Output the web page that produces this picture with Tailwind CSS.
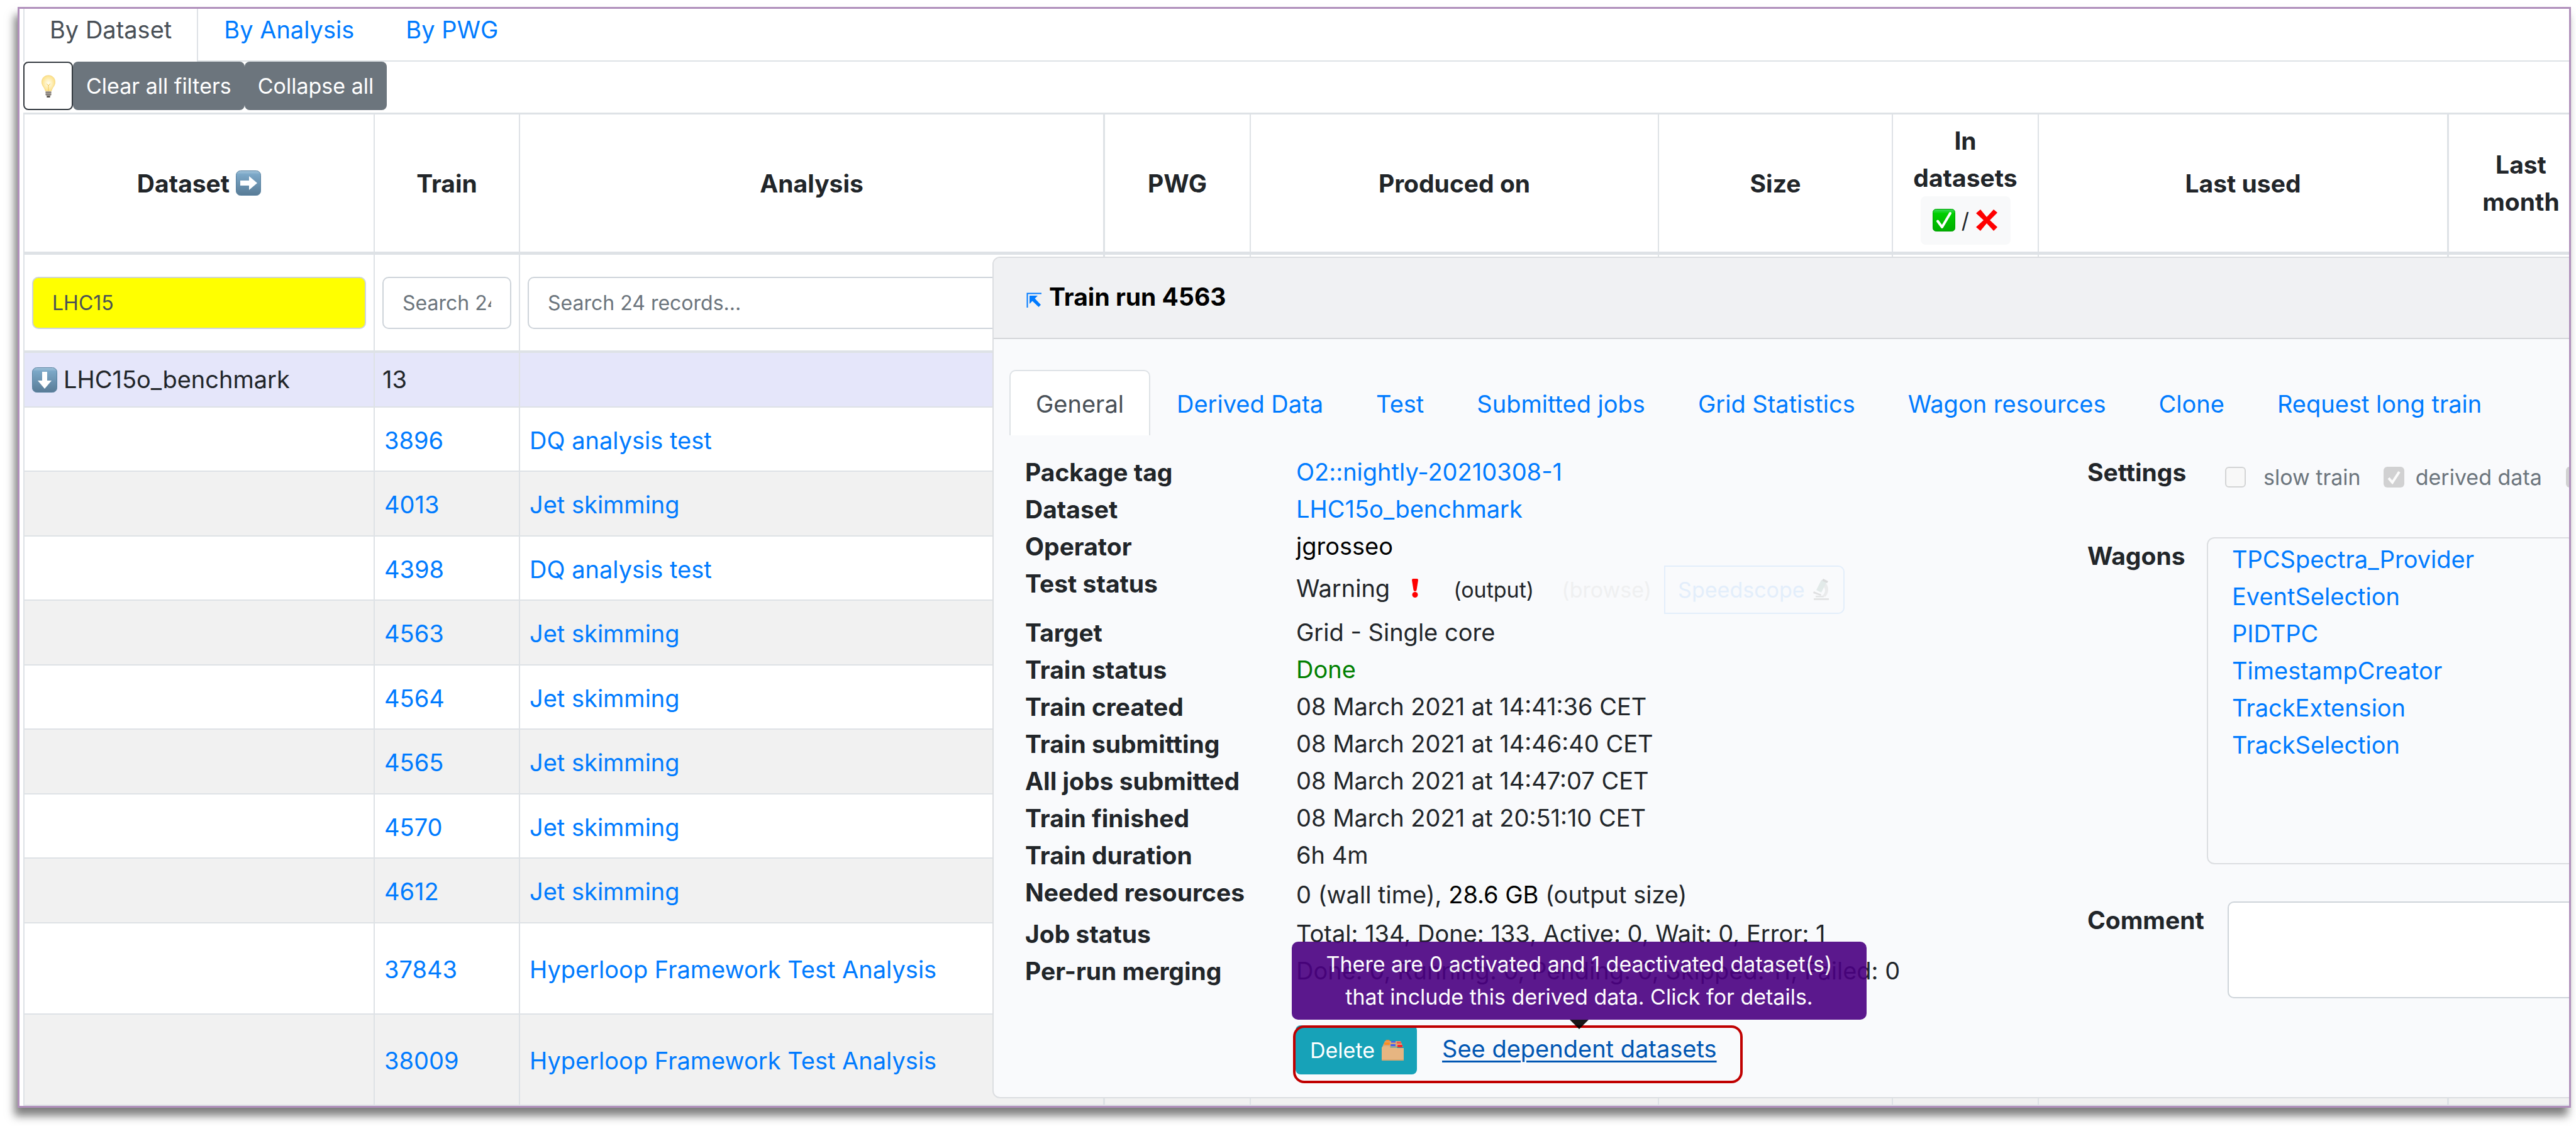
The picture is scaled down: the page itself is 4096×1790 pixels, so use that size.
<!DOCTYPE html>
<html lang="en">
<head>
<meta charset="utf-8">
<title>Train run 4563</title>
<script src="https://cdn.jsdelivr.net/npm/@tailwindcss/browser@4"></script>
</head>
<body class="bg-white pt-[11px] pl-7 pr-2 pb-[29px] font-['Inter','Liberation_Sans',sans-serif] text-[38px] leading-[59px] text-[#212529]">
<svg class="absolute h-0 w-0" aria-hidden="true">
  <defs>
    <linearGradient id="steel" x1="0" y1="0" x2="0" y2="1"><stop offset="0" stop-color="#a5c6dc"/><stop offset=".15" stop-color="#7ba7c7"/><stop offset="1" stop-color="#587b96"/></linearGradient>
    <linearGradient id="leaf" x1="0" y1="0" x2="0" y2="1"><stop offset="0" stop-color="#3fdc5c"/><stop offset=".2" stop-color="#00cf00"/><stop offset="1" stop-color="#00ae00"/></linearGradient>
    <radialGradient id="glow"><stop offset="0" stop-color="#fffef2"/><stop offset="1" stop-color="#fde28a"/></radialGradient>
  </defs>
</svg>

<main class="relative overflow-hidden border-[3px] border-[#b08fbb] bg-white shadow-[-5px_13px_13px_rgba(0,0,0,0.5)]">
  <nav class="ml-[6px] flex h-[84px] border-b-2 border-[#dee2e6]" aria-label="Grouping">
    <a href="#dataset" class="-mb-[2px] border-x-2 border-[#dee2e6] bg-white px-10 pt-1 text-[#495057]">By Dataset</a>
    <a href="#analysis" class="px-[41px] pt-1 text-[#007bff]">By Analysis</a>
    <a href="#pwg" class="px-[41px] pt-1 text-[#007bff]">By PWG</a>
  </nav>

  <div class="ml-[6px] flex h-[81px] items-start text-[34px]">
    <button type="button" aria-label="Hints" class="flex h-[77px] w-[79px] items-center justify-center rounded-lg border-2 border-[#343a40] bg-white">
      <svg class="h-[36px] w-[24px]" viewBox="0 0 24 36"><path d="M12 1C5.500 1 1.500 5.500 1.500 11.500c0 4.500 2.600 7 4.200 10 .8 1.600 1.200 3 1.800 4.500h9c.6-1.500 1-2.900 1.800-4.500 1.600-3 4.200-5.500 4.200-10C22.500 5.500 18.500 1 12 1z" fill="url(#glow)" stroke="#f5d680"/><path d="M9 14l3 3 3-3M12 17v9" fill="none" stroke="#f1c75b"/><path d="M7.500 26h9v6l-2 2v2h-5v-2l-2-2z" fill="#a8a29a"/><path d="M7.500 28.500h9M7.500 31.500h9" stroke="#6f6a64"/><rect x="9.500" y="33.500" width="5" height="2.500" fill="#4c4844"/></svg>
    </button>
    <button type="button" class="h-[77px] rounded-lg bg-[#6c757d] px-[21px] text-white">Clear all filters</button>
    <button type="button" class="h-[77px] rounded-lg bg-[#6c757d] px-[21px] text-white">Collapse all</button>
  </div>

  <div class="pl-[6px]">
  <table class="w-[calc(100%+38px)] table-fixed border-separate border-spacing-0 text-left [&_td]:border-l-2 [&_td]:border-[#dee2e6] [&_td]:px-[15px] [&_th]:border-t-[3px] [&_th]:border-b-[5px] [&_th]:border-l-2 [&_th]:border-[#dee2e6] [&_th]:text-center [&_th]:text-[39px] [&_th]:font-bold [&_th:nth-child(4)]:border-l-[3px] [&_th:nth-child(9)]:border-l-[3px] [&_td:nth-child(4)]:border-l-[3px] [&_td:nth-child(9)]:border-l-[3px]">
    <colgroup>
      <col class="w-[557px]"><col class="w-[231px]"><col><col class="w-[233px]"><col class="w-[649px]"><col class="w-[372px]"><col class="w-[232px]"><col class="w-[651px]"><col class="w-[232px]">
    </colgroup>
    <thead>
      <tr class="h-[226px]">
        <th scope="col"><span class="inline-flex items-center gap-[10px]">Dataset
          <svg class="h-10 w-10" viewBox="0 0 40 40" role="img" aria-label="right"><rect x=".5" y=".5" width="39" height="39" rx="7" fill="url(#steel)" stroke="#56809f"/><path d="M7 16h14V9l13 11-13 11v-7H7z" fill="#fff"/></svg></span></th>
        <th scope="col">Train</th>
        <th scope="col">Analysis</th>
        <th scope="col">PWG</th>
        <th scope="col">Produced on</th>
        <th scope="col">Size</th>
        <th scope="col">In<br>datasets
          <span class="mx-auto flex h-[77px] w-[143px] items-center justify-center gap-[10px] rounded-lg bg-[#f8f9fa] text-[34px] font-normal">
            <svg class="h-9 w-9" viewBox="0 0 36 36" role="img" aria-label="yes"><rect x=".5" y=".5" width="35" height="35" rx="5" fill="url(#leaf)" stroke="#00a000"/><path d="M8 19.500l7 9.500L28 7" fill="none" stroke="#fff" stroke-width="4" stroke-linecap="round" stroke-linejoin="round"/></svg>/
            <svg class="h-9 w-9" viewBox="0 0 36 36" role="img" aria-label="no"><path d="M1 7L8 1l10 12L29 1l6 5-12 12 12 11-6 6-11-12L8 35l-7-6 12-11z" fill="#fe0000"/></svg>
          </span></th>
        <th scope="col">Last used</th>
        <th scope="col">Last<br>month</th>
      </tr>
    </thead>
    <tbody class="[&_a]:text-[#007bff]">
      <tr class="h-[156px] [&_td]:border-b-4 [&_td]:px-3! [&_input]:block [&_input]:h-[83px] [&_input]:w-full [&_input]:rounded-[10px] [&_input]:border-2 [&_input]:border-[#ced4da] [&_input]:px-[30px] [&_input]:text-[32px] [&_input]:text-[#495057] [&_input]:placeholder:text-[#6c757d]">
        <td><input type="text" aria-label="Filter dataset" value="LHC15" class="bg-[#ffff00]"></td>
        <td><input type="text" aria-label="Filter train" placeholder="Search 24 records..." class="bg-white"></td>
        <td><input type="text" aria-label="Filter analysis" placeholder="Search 24 records..." class="bg-white"></td>
        <td></td><td></td><td></td><td></td><td></td><td></td>
      </tr>
      <tr class="h-[87px] bg-[#e5e6fa] [&_td]:border-b-2 [&_td]:px-3!">
        <td><span class="flex items-center gap-[10px]"><svg class="h-10 w-10" viewBox="0 0 40 40" role="img" aria-label="expanded"><rect x=".5" y=".5" width="39" height="39" rx="7" fill="url(#steel)" stroke="#56809f"/><path d="M16 7h8v14h7L20 34 9 21h7z" fill="#fff"/></svg>LHC15o_benchmark</span></td>
        <td>13</td><td></td><td></td><td></td><td></td><td></td><td></td><td></td>
      </tr>
    </tbody>
    <tbody class="[&_a]:text-[#007bff] [&_td]:border-b-2 [&_td]:pt-1 [&_tr]:h-[103px] [&_tr]:odd:h-[102px] [&_tr]:even:bg-[#f1f1f1]">
      <tr><td></td><td><a href="#3896">3896</a></td><td><a href="#dq">DQ analysis test</a></td><td></td><td></td><td></td><td></td><td></td><td></td></tr>
      <tr><td></td><td><a href="#4013">4013</a></td><td><a href="#jet">Jet skimming</a></td><td></td><td></td><td></td><td></td><td></td><td></td></tr>
      <tr><td></td><td><a href="#4398">4398</a></td><td><a href="#dq">DQ analysis test</a></td><td></td><td></td><td></td><td></td><td></td><td></td></tr>
      <tr><td></td><td><a href="#4563">4563</a></td><td><a href="#jet">Jet skimming</a></td><td></td><td></td><td></td><td></td><td></td><td></td></tr>
      <tr><td></td><td><a href="#4564">4564</a></td><td><a href="#jet">Jet skimming</a></td><td></td><td></td><td></td><td></td><td></td><td></td></tr>
      <tr><td></td><td><a href="#4565">4565</a></td><td><a href="#jet">Jet skimming</a></td><td></td><td></td><td></td><td></td><td></td><td></td></tr>
      <tr><td></td><td><a href="#4570">4570</a></td><td><a href="#jet">Jet skimming</a></td><td></td><td></td><td></td><td></td><td></td><td></td></tr>
      <tr><td></td><td><a href="#4612">4612</a></td><td><a href="#jet">Jet skimming</a></td><td></td><td></td><td></td><td></td><td></td><td></td></tr>
    </tbody>
    <tbody class="[&_a]:text-[#007bff] [&_td]:border-b-2 [&_td]:pt-1 [&_tr]:h-[145px] [&_tr]:even:bg-[#f1f1f1]">
      <tr><td></td><td><a href="#37843">37843</a></td><td><a href="#hyperloop">Hyperloop Framework Test Analysis</a></td><td></td><td></td><td></td><td></td><td></td><td></td></tr>
      <tr><td></td><td><a href="#38009">38009</a></td><td><a href="#hyperloop">Hyperloop Framework Test Analysis</a></td><td></td><td></td><td></td><td></td><td></td><td></td></tr>
    </tbody>
  </table>
  </div>

  <section class="absolute top-[394px] bottom-[12px] left-[1547px] -right-3 overflow-hidden rounded-xl border-2 border-[#dcdee1] bg-[#f9fafc]">
    <header class="flex h-[129px] items-center gap-3 border-b-2 border-[#d4d6d9] bg-[#f0f1f3] pt-1 pb-2 pl-[52px]">
      <a href="#open" aria-label="Open in page"><svg class="mt-[10px] h-6 w-6" viewBox="0 0 24 24"><path d="M1.500 24V1.500H24" fill="none" stroke="#007bff" stroke-width="2"/><path d="M5 5h13l-4.500 4.500L23 19.500 19.500 23 9.500 13.500 5 18z" fill="#007bff"/></svg></a>
      <h1 class="text-[39px] font-bold text-black">Train run 4563</h1>
    </header>

    <nav class="mt-[49px] ml-[25px] flex leading-[60px] whitespace-nowrap text-[#007bff] [&_a]:px-[42px] [&_a]:pt-6 [&_a]:pb-5" aria-label="Train run">
      <a href="#general" class="rounded-t-[10px] border-2 border-b-0 border-[#dee2e6] bg-white px-10! pt-[22px]! text-[#495057]">General</a>
      <a href="#derived">Derived Data</a>
      <a href="#test">Test</a>
      <a href="#jobs">Submitted jobs</a>
      <a href="#grid">Grid Statistics</a>
      <a href="#wagon">Wagon resources</a>
      <a href="#clone">Clone</a>
      <a href="#long">Request long train</a>
    </nav>

    <div class="mt-[29px] flex pl-[50px]">
      <div class="flex-1">
        <dl class="grid grid-cols-[431px_1fr] whitespace-nowrap [&_dt]:text-[39px] [&_dt]:font-bold">
          <dt>Package tag</dt><dd><a href="#package" class="text-[#007bff]">O2::nightly-20210308-1</a></dd>
          <dt>Dataset</dt><dd><a href="#dataset" class="text-[#007bff]">LHC15o_benchmark</a></dd>
          <dt>Operator</dt><dd class="text-black">jgrosseo</dd>
          <dt>Test status</dt>
          <dd class="flex h-[78px] items-center">
            <span class="pb-1">Warning</span>
            <svg class="ml-[34px] mb-1 h-[30px] w-[12px]" viewBox="0 0 12 30" role="img" aria-label="attention"><path d="M1 2q0-2 2-2h6q2 0 2 2L8.500 18q-.3 2-2.500 2t-2.500-2z" fill="#fe0000"/><circle cx="6" cy="25.500" r="4.500" fill="#fe0000"/></svg>
            <button type="button" class="ml-[55px] text-[34px]">(output)</button>
            <button type="button" disabled class="ml-[44px] text-[34px] text-[#eff0f1]">(browse)</button>
            <button type="button" disabled class="ml-[20px] flex h-[77px] items-center gap-[11px] rounded-r-[10px] border-2 border-[#e3eefb] px-[20px] text-[34px] text-[#e3eefb]">Speedscope
              <svg class="h-[34px] w-[30px]" viewBox="0 0 30 34"><path d="M3 31h24v3H3zM6 27h13v2.500H6z" fill="#e4e5e6"/><path d="M19 8l3-1c5 5 6 15-1 22l-4-2c5-5 5-11 1-15z" fill="#eaebec"/><path d="M15 2l8 4-8 16-8-4z" fill="#e2eae9"/><path d="M18 0l8 4-2 3-8-4z" fill="#dadbdc"/><path d="M3 20l12 5-1 2-12-4z" fill="#dfe0e1"/></svg></button>
          </dd>
          <dt>Target</dt><dd>Grid - Single core</dd>
          <dt>Train status</dt><dd class="text-[#008000]">Done</dd>
          <dt>Train created</dt><dd>08 March 2021 at 14:41:36 CET</dd>
          <dt>Train submitting</dt><dd>08 March 2021 at 14:46:40 CET</dd>
          <dt>All jobs submitted</dt><dd>08 March 2021 at 14:47:07 CET</dd>
          <dt>Train finished</dt><dd>08 March 2021 at 20:51:10 CET</dd>
          <dt>Train duration</dt><dd>6h 4m</dd>
          <dt>Needed resources</dt><dd class="pt-1 pb-[3px]">0 (wall time), <span class="text-black">28.6 GB</span> (output size)</dd>
          <dt>Job status</dt><dd>Total: 134, Done: 133, Active: 0, Wait: 0, Error: 1</dd>
          <dt>Per-run merging</dt><dd>Done: 0, Running: 0, Pending: 0, Skipped: 11, Failed: 0</dd>
        </dl>
        <div class="relative mt-[57px] ml-[426px] flex h-[92px] w-[715px] items-start">
          <button type="button" class="ml-1 flex h-[78px] items-center gap-[11px] rounded-lg bg-[#17a2b8] pr-[21px] pl-[23px] text-[34px] text-white">Delete
            <svg class="h-[33px] w-[35px]" viewBox="0 0 35 33"><path d="M5 2h25l4 9H1z" fill="#dba677"/><path d="M7 0h5l1.500 2.500H5.500z" fill="#f58b2c"/><rect x="4" y="4" width="9" height="4" rx="1" fill="#fb8f22"/><rect x="15" y="2" width="7" height="2.500" fill="#4b63e8"/><rect x="14" y="7" width="8" height="3" rx="1" fill="#3f5cf5"/><rect x="24" y="3" width="7" height="3" fill="#f2574c"/><rect x="25" y="8" width="8" height="4" rx="1" fill="#f7262b"/><path d="M0 12l3-2h9l2 2h10l1 1h10v20H0z" fill="#e6b581"/><path d="M0 31h35v2H0z" fill="#dba870"/></svg></button>
          <a href="#dependents" class="ml-10 mt-2 text-[#0056b3] underline decoration-[3px] underline-offset-[5px]">See dependent datasets</a>
          <div class="pointer-events-none absolute inset-0 rounded-[18px] border-4 border-[#c00000]"></div>
          <div role="tooltip" class="absolute bottom-[86px] left-[-2px] flex w-[914px] flex-col items-center opacity-90">
            <p class="w-full rounded-[10px] bg-[#4b0082] px-5 py-[10px] text-center text-[34px] leading-[52px] text-white">There are 0 activated and 1 deactivated dataset(s)<br>that include this derived data. Click for details.</p>
            <svg class="h-[15px] w-[30px]" viewBox="0 0 30 15"><path d="M0 0h30L15 15z" fill="#000"/></svg>
          </div>
        </div>
      </div>

      <div class="w-[776px] shrink-0">
        <div class="flex h-[59px] text-[34px] whitespace-nowrap text-[#6c757d] [&_input]:shrink-0 [&_label]:h-[59px] [&_label]:shrink-0">
          <h2 class="w-[219px] shrink-0 text-[39px] font-bold text-[#212529]">Settings</h2>
          <label class="mt-2 flex items-center gap-[28px]"><input type="checkbox" disabled class="h-[33px] w-[33px] appearance-none rounded-[6px] border-2 border-[#d3d4d5] bg-[#f8f8f8]">slow train</label>
          <label class="relative mt-2 ml-9 flex items-center gap-[18px]"><input type="checkbox" checked disabled class="h-[33px] w-[33px] appearance-none rounded-[6px] bg-[#d1d1d2]"><svg class="absolute left-[5px] h-6 w-6" viewBox="0 0 24 24"><path d="M3 13l6 7L20 3" fill="none" stroke="#fbfbfb" stroke-width="4"/></svg>derived data</label>
          <label class="mt-2 ml-[38px] flex items-center gap-[18px]"><input type="checkbox" checked disabled aria-label="more" class="h-[33px] w-[33px] appearance-none rounded-[6px] bg-[#d1d1d2]"></label>
        </div>
        <div class="mt-[74px] flex">
          <h2 class="w-[190px] text-[39px] font-bold">Wagons</h2>
          <ul class="h-[520px] flex-1 rounded-xl border-2 border-[#dcdee1] pt-1 pl-[38px] text-[#007bff]">
            <li><a href="#w1">TPCSpectra_Provider</a></li>
            <li><a href="#w2">EventSelection</a></li>
            <li><a href="#w3">PIDTPC</a></li>
            <li><a href="#w4">TimestampCreator</a></li>
            <li><a href="#w5">TrackExtension</a></li>
            <li><a href="#w6">TrackSelection</a></li>
          </ul>
        </div>
        <div class="mt-[59px] flex">
          <label for="comment" class="w-[223px] text-[39px] font-bold">Comment</label>
          <textarea id="comment" class="block h-[154px] flex-1 resize-none rounded-[10px] border-2 border-[#ced4da] bg-white p-5"></textarea>
        </div>
      </div>
    </div>
  </section>
</main>
</body>
</html>
